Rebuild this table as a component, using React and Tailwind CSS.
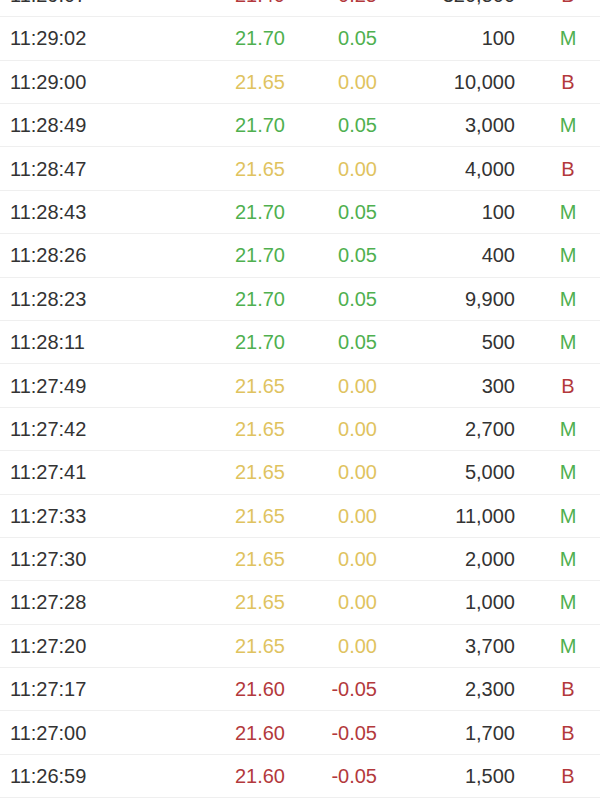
import React from "react";

const rows = [
  ["11:29:07", "21.40", "-0.25", "320,500", "B"],
  ["11:29:02", "21.70", "0.05", "100", "M"],
  ["11:29:00", "21.65", "0.00", "10,000", "B"],
  ["11:28:49", "21.70", "0.05", "3,000", "M"],
  ["11:28:47", "21.65", "0.00", "4,000", "B"],
  ["11:28:43", "21.70", "0.05", "100", "M"],
  ["11:28:26", "21.70", "0.05", "400", "M"],
  ["11:28:23", "21.70", "0.05", "9,900", "M"],
  ["11:28:11", "21.70", "0.05", "500", "M"],
  ["11:27:49", "21.65", "0.00", "300", "B"],
  ["11:27:42", "21.65", "0.00", "2,700", "M"],
  ["11:27:41", "21.65", "0.00", "5,000", "M"],
  ["11:27:33", "21.65", "0.00", "11,000", "M"],
  ["11:27:30", "21.65", "0.00", "2,000", "M"],
  ["11:27:28", "21.65", "0.00", "1,000", "M"],
  ["11:27:20", "21.65", "0.00", "3,700", "M"],
  ["11:27:17", "21.60", "-0.05", "2,300", "B"],
  ["11:27:00", "21.60", "-0.05", "1,700", "B"],
  ["11:26:59", "21.60", "-0.05", "1,500", "B"],
];

const priceColor = (chg) => {
  if (chg.startsWith("-")) return "text-[#b3393c]";
  if (chg === "0.00") return "text-[#e0c35f]";
  return "text-[#4fb04f]";
};

const Row = ({ time, price, chg, vol, side }) => {
  const color = priceColor(chg);
  return (
    <div className="flex items-center h-[43.4px] border-b border-[#efefef] text-[20px] leading-none">
      <div className="w-[200px] shrink-0 pl-[10px] text-[#333333]">{time}</div>
      <div className={`w-[85px] shrink-0 text-right ${color}`}>{price}</div>
      <div className={`w-[92px] shrink-0 text-right ${color}`}>{chg}</div>
      <div className="w-[138px] shrink-0 text-right text-[#333333]">{vol}</div>
      <div
        className={`w-[85px] shrink-0 pl-[21px] text-center ${
          side === "M" ? "text-[#4fb04f]" : "text-[#b3393c]"
        }`}
      >
        {side}
      </div>
    </div>
  );
};

export default function App() {
  return (
    <div
      className="w-[600px] h-[800px] overflow-hidden bg-white"
      style={{ fontFamily: '"Liberation Sans", Arial, sans-serif' }}
    >
      <div className="-mt-[26.2px]">
        {rows.map(([time, price, chg, vol, side], i) => (
          <Row
            key={i}
            time={time}
            price={price}
            chg={chg}
            vol={vol}
            side={side}
          />
        ))}
      </div>
    </div>
  );
}
